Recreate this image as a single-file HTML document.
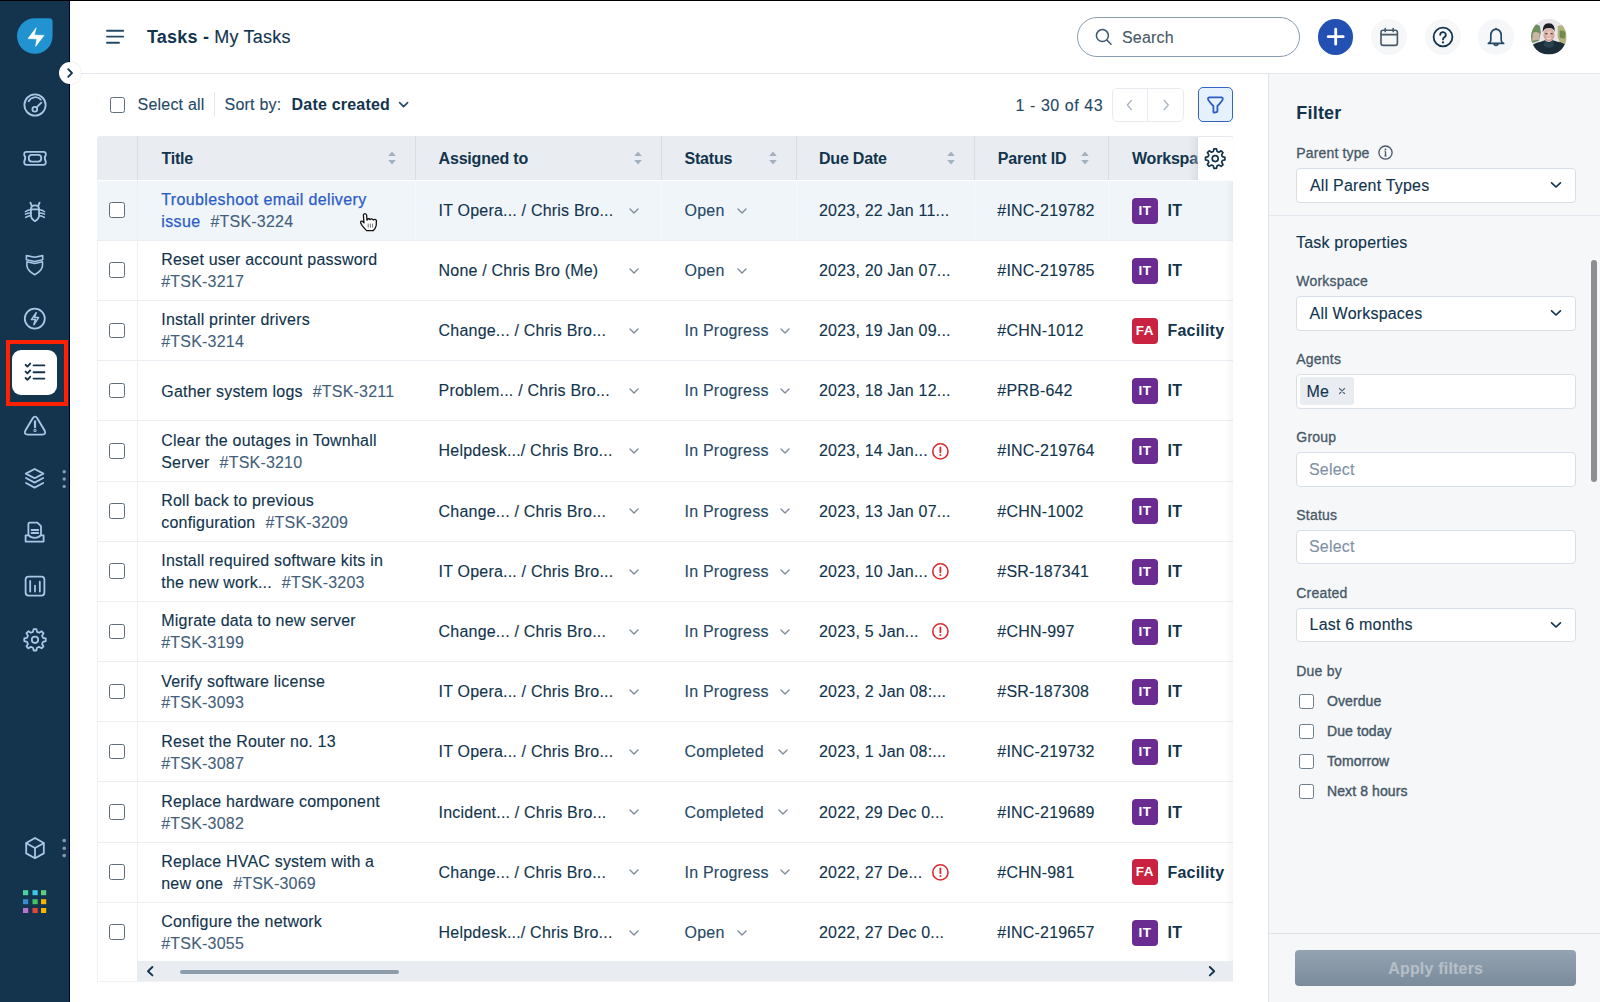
<!DOCTYPE html>
<html><head><meta charset="utf-8">
<style>
*{box-sizing:border-box;margin:0;padding:0}
html,body{width:1600px;height:1002px;overflow:hidden;background:#fff;font-family:"Liberation Sans",sans-serif;color:#12344d}
.abs{position:absolute}
.t{position:absolute;white-space:nowrap;line-height:1;letter-spacing:0.2px;-webkit-text-stroke:0.12px currentColor}
.md{-webkit-text-stroke:0.25px currentColor}
#topline{position:absolute;left:0;top:0;width:1600px;height:1px;background:#000;z-index:50}
#side{position:absolute;left:0;top:0;width:70px;height:1002px;background:#14334d;border-right:1px solid #000033}
#hdr{position:absolute;left:70px;top:0;width:1530px;height:74px;border-bottom:1px solid #e3e8ee;background:#fff}
#panel{position:absolute;left:1268px;top:74px;width:332px;height:928px;background:#f5f7f9;border-left:1px solid #dfe4ea}
.cb{position:absolute;width:15.5px;height:15.5px;border:1.6px solid #5f6d7a;border-radius:2.5px;background:#fff}
.row{position:absolute;left:97px;width:1136px;height:60.14px;border-bottom:1px solid #ebeff3}
.hover{background:#f0f5fa}
.badge{position:absolute;width:26px;height:26px;border-radius:4px;color:#fff;font-weight:700;font-size:13.5px;line-height:26px;text-align:center}
.fbox{position:absolute;left:1296px;width:280px;height:35px;background:#fff;border:1px solid #d8dfe6;border-radius:4px}
</style></head>
<body>
<div id="topline"></div>
<div id="side"><svg class="abs" style="left:0;top:0" width="70" height="1002" viewBox="0 0 70 1002">
<g fill="none" stroke="#a9c6e6" stroke-width="1.8" stroke-linecap="round" stroke-linejoin="round">
<!-- gauge -->
<circle cx="35" cy="105" r="10.6"/>
<path d="M28.6 101.2 A7.6 7.6 0 0 1 40.8 99.6"/>
<path d="M36.8 107.2 L41.4 102.6"/>
<circle cx="34.8" cy="109.2" r="2.4"/>
<!-- ticket -->
<path d="M26.4 151.8 H43.6 A2.2 2.2 0 0 1 45.8 154 V155 Q43.6 158.2 45.8 161.4 V162.6 A2.2 2.2 0 0 1 43.6 164.8 H26.4 A2.2 2.2 0 0 1 24.2 162.6 V161.4 Q26.4 158.2 24.2 155 V154 A2.2 2.2 0 0 1 26.4 151.8 Z"/>
<rect x="28.8" y="154.8" width="12.4" height="6.8" rx="3"/>
<!-- bug -->
<path d="M30.9 209.4 H39.1 V215.4 Q39.1 218.6 35 221.2 Q30.9 218.6 30.9 215.4 Z"/>
<path d="M30.9 209.4 Q30.9 205.3 35 205.3 Q39.1 205.3 39.1 209.4"/>
<path d="M31.8 205.9 L30.4 202.6 M38.2 205.9 L39.6 202.6"/>
<path d="M30.9 209.8 Q27.6 209.9 25.4 211.8 M30.9 213 Q27.6 213 25.4 214.2 M30.9 215.4 Q27.8 215.8 25.6 217.4 M39.1 209.8 Q42.4 209.9 44.6 211.8 M39.1 213 Q42.4 213 44.6 214.2 M39.1 215.4 Q42.2 215.8 44.4 217.4" stroke-width="1.5"/>
<!-- shield -->
<path d="M26.4 255.6 L34.7 257.3 L42.7 255.6 V259.8 L34.7 261.5 L26.4 259.8 Z" stroke-width="1.6"/>
<path d="M26.9 261.8 L34.7 263.5 L42.5 261.8 V265.6 Q42.2 270.4 34.7 274.8 Q27.2 270.4 26.9 265.6 Z" stroke-width="1.6"/>
<!-- lightning circle -->
<circle cx="34.8" cy="318.6" r="10"/>
<path d="M36.2 312.6 L31.4 319.6 H35.4 L33.8 324.8 L38.6 317.6 H34.6 Z" stroke-width="1.5"/>
<!-- warning -->
<path d="M32.6 418.4 Q35 414.9 37.4 418.4 L44.6 430.6 Q46.5 434.6 42.2 434.6 H27.8 Q23.5 434.6 25.4 430.6 Z" stroke-width="1.9"/>
<path d="M35 421.4 V427.2" stroke-width="2.2"/>
<circle cx="35" cy="430.4" r="0.5" stroke-width="2.2"/>
<!-- layers -->
<path d="M34.6 469 L43.4 473.6 L34.6 478.2 L25.8 473.6 Z"/>
<path d="M26 478 L34.6 482.6 L43.2 478"/>
<path d="M26 483 L34.6 487.6 L43.2 483"/>
<!-- doc tray -->
<path d="M28.4 535 V524 Q28.4 522.6 29.8 522.6 H37.4 L41 526.2 V535"/>
<path d="M31.6 530 H38.2 M31.6 533 H38.2"/>
<path d="M25.6 535.4 H28.8 Q30.6 537.8 34.7 537.8 Q38.8 537.8 40.6 535.4 H43.6 V541.6 H25.6 Z"/>
<!-- bar chart -->
<rect x="25.6" y="576.6" width="18.8" height="19" rx="3"/>
<path d="M30.2 581 V591.6 M35 585.6 V591.6 M39.8 581.6 V591.6"/>
<!-- cube -->
<path d="M35 838 L43.8 843 V853.4 L35 858.2 L26.2 853.4 V843 Z"/>
<path d="M26.4 843.2 L35 848 L43.6 843.2 M35 848 V857.8"/>
</g>
<!-- gear -->
<path fill="none" stroke="#a9c6e6" stroke-width="1.8" stroke-linejoin="round" d="M45.71 638.45 L45.71 641.15 L42.94 641.84 L42.06 643.97 L43.53 646.42 L41.62 648.33 L39.17 646.86 L37.04 647.74 L36.35 650.51 L33.65 650.51 L32.96 647.74 L30.83 646.86 L28.38 648.33 L26.47 646.42 L27.94 643.97 L27.06 641.84 L24.29 641.15 L24.29 638.45 L27.06 637.76 L27.94 635.63 L26.47 633.18 L28.38 631.27 L30.83 632.74 L32.96 631.86 L33.65 629.09 L36.35 629.09 L37.04 631.86 L39.17 632.74 L41.62 631.27 L43.53 633.18 L42.06 635.63 L42.94 637.76 Z"/><circle cx="35" cy="639.8" r="3.2" fill="none" stroke="#a9c6e6" stroke-width="1.8"/>
<g fill="#8a9bb0">
<circle cx="64.2" cy="471.8" r="1.7"/><circle cx="64.2" cy="479" r="1.7"/><circle cx="64.2" cy="486.4" r="1.7"/>
<circle cx="64.2" cy="840.6" r="1.8"/><circle cx="64.2" cy="848.2" r="1.8"/><circle cx="64.2" cy="855.6" r="1.8"/>
</g>
<rect x="23" y="890.2" width="5.2" height="5" fill="#4fd1a6"/>
<rect x="32.5" y="890.2" width="5.2" height="5" fill="#3dcbe9"/>
<rect x="41" y="890.2" width="5.2" height="5" fill="#5ecf7a"/>
<rect x="23" y="899.2" width="5.2" height="5" fill="#3b8bd4"/>
<rect x="32.5" y="899.2" width="5.2" height="5" fill="#42c46b"/>
<rect x="41" y="899.2" width="5.2" height="5" fill="#f7b500"/>
<rect x="23" y="908" width="5.2" height="5" fill="#b974cc"/>
<rect x="32.5" y="908" width="5.2" height="5" fill="#e8453c"/>
<rect x="41" y="908" width="5.2" height="5" fill="#f7b500"/>
</svg>
<svg class="abs" style="left:17px;top:18px" width="36" height="36" viewBox="0 0 36 36">
<path d="M17.8 0.2 H32.2 A3.4 3.4 0 0 1 35.6 3.6 V17.8 A17.8 17.8 0 1 1 17.8 0.2 Z" fill="#2193d1"/>
<path d="M19.2 9.8 L11 20.6 L19.8 20.9 L18.6 28.4 L27 17.4 L17.4 17.1 Z" fill="#fff" stroke="#fff" stroke-width="0.6" stroke-linejoin="round"/>
</svg><div class="abs" style="left:12.4px;top:350px;width:44.8px;height:44.8px;background:#fff;border-radius:9px"></div>
<svg class="abs" style="left:12px;top:350px" width="46" height="46" viewBox="12 350 46 46">
<g fill="none" stroke="#12344d" stroke-width="1.9" stroke-linecap="round" stroke-linejoin="round">
<path d="M25.6 364.8 L27.4 366.6 L30.2 363.6"/>
<path d="M25.6 371.6 L27.4 373.4 L30.2 370.4"/>
<path d="M25.6 378 L27.4 379.8 L30.2 376.8"/>
<path d="M33.6 365.4 H44.4 M33.6 372.2 H44.4 M33.6 378.6 H44.4"/>
</g></svg>
<div class="abs" style="left:6px;top:340.4px;width:62px;height:65.8px;border:4px solid #ff2200"></div>
</div><div class="abs" style="left:59px;top:62px;width:22px;height:22px;border-radius:50%;background:#fff;box-shadow:0 0 2px rgba(0,0,0,0.15);z-index:5"></div>
<svg class="abs" style="left:59px;top:62px;z-index:6" width="22" height="22" viewBox="0 0 22 22"><path d="M9.2 7.2 L13 11 L9.2 14.8" fill="none" stroke="#12344d" stroke-width="1.8" stroke-linecap="round" stroke-linejoin="round"/></svg><div id="hdr"></div><svg class="abs" style="left:100px;top:24px" width="30" height="26" viewBox="100 24 30 26"><g stroke="#264966" stroke-width="1.9" stroke-linecap="round"><path d="M107 30.7 H123.2 M107 36.6 H123.2 M107 42.8 H119"/></g></svg><div class="t" style="left:147px;top:28.36px;font-size:18px;font-weight:400;color:#12344d;"><b style="font-weight:700;-webkit-text-stroke:0">Tasks - </b>My Tasks</div><div class="abs" style="left:1077px;top:17px;width:223px;height:40px;border:1.2px solid #8a9cb0;border-radius:20px"></div><svg class="abs" style="left:1090px;top:24px" width="26" height="26" viewBox="1090 24 26 26"><g fill="none" stroke="#3b5770" stroke-width="1.5" stroke-linecap="round"><circle cx="1102.4" cy="35.6" r="6"/><path d="M1106.8 40 L1111 44.2"/></g></svg><div class="t" style="left:1122px;top:29.56px;font-size:16px;font-weight:400;color:#475867;">Search</div><div class="abs" style="left:1317.6px;top:19.3px;width:35.4px;height:35.4px;border-radius:50%;background:#2350b3"></div><svg class="abs" style="left:1317.6px;top:19.3px" width="36" height="36" viewBox="0 0 36 36"><path d="M17.7 10.2 V25.2 M10.2 17.7 H25.2" stroke="#fff" stroke-width="2.8" stroke-linecap="round"/></svg><div class="abs" style="left:1371px;top:19px;width:36px;height:36px;border-radius:50%;background:#f5f7f9"></div><div class="abs" style="left:1424.5px;top:19px;width:36px;height:36px;border-radius:50%;background:#f5f7f9"></div><div class="abs" style="left:1478px;top:19px;width:36px;height:36px;border-radius:50%;background:#f5f7f9"></div><svg class="abs" style="left:1371px;top:19px" width="36" height="36" viewBox="1371 19 36 36"><g fill="none" stroke="#475867" stroke-width="1.6" stroke-linecap="round" stroke-linejoin="round">
<rect x="1381" y="30.2" width="16.4" height="15.2" rx="2.2"/><path d="M1381.2 34.6 H1397.2 M1385.2 28.6 V31.6 M1393.2 28.6 V31.6"/></g></svg><svg class="abs" style="left:1424.5px;top:19px" width="36" height="36" viewBox="0 0 36 36"><g fill="none" stroke="#12344d" stroke-width="1.8" stroke-linecap="round">
<circle cx="18" cy="18" r="9.4"/><path d="M15.2 15.8 A2.8 2.8 0 1 1 19.2 18.4 Q18 19 18 20.4"/></g><circle cx="18" cy="23.4" r="1.1" fill="#12344d"/></svg><svg class="abs" style="left:1478px;top:19px" width="36" height="36" viewBox="0 0 36 36"><g fill="none" stroke="#264966" stroke-width="1.7" stroke-linecap="round" stroke-linejoin="round">
<path d="M18 9.6 Q18 9.6 18 10.2 Q12.8 11 12.8 16.6 V21.2 Q12.8 23.4 10.4 24.4 H25.6 Q23.2 23.4 23.2 21.2 V16.6 Q23.2 11 18 10.2"/><path d="M16.2 25.4 Q18 27.6 19.8 25.4"/></g></svg><svg class="abs" style="left:1531.3px;top:19.3px" width="35.6" height="35.6" viewBox="0 0 36 36">
<defs><clipPath id="av"><circle cx="18" cy="18" r="18"/></clipPath><radialGradient id="fg" cx="0.5" cy="0.4" r="0.6"><stop offset="0" stop-color="#f0cfc4"/><stop offset="1" stop-color="#c99a8c"/></radialGradient></defs>
<g clip-path="url(#av)">
<rect width="36" height="36" fill="#ebe5ec"/>
<path d="M0 6 Q5 4 9 7 L10 14 L8 22 L2 24 L0 24 Z" fill="#6d8f5e"/>
<path d="M2 14 Q6 12 9 15 L8 21 L1 22 Z" fill="#c9b6a6"/>
<path d="M27 7 Q32 5 36 8 V26 L30 26 L27 18 Z" fill="#b3b37e"/>
<path d="M29 12 Q33 11 35 14 L34 20 L29 19 Z" fill="#6f8a4e"/>
<path d="M0 28 Q3 24 10 23 L14 21.5 Q18 25 22 21.5 L27 23 Q33 24 36 27 V36 H0 Z" fill="#1b2d38"/>
<path d="M14 21.5 Q18 27 22 21.5 L23.5 27 Q18 31 12.5 27 Z" fill="#2a4250"/>
<ellipse cx="18.2" cy="16" rx="5.6" ry="6.8" fill="url(#fg)"/>
<path d="M11.8 13.4 Q11.4 4.2 18 4.2 Q24.6 4.2 24 13 Q23 8.8 18.2 9 Q13.4 8.8 11.8 13.4 Z" fill="#1c1f24"/>
<path d="M14.4 15 H16.8 M19.6 15 H22" stroke="#3a2a26" stroke-width="1.1"/>
<path d="M16 19.6 Q18.2 21 20.4 19.6" stroke="#fff" stroke-width="0.8" fill="none"/>
</g></svg><div class="cb" style="left:109.5px;top:97.2px"></div><div class="t" style="left:137.6px;top:97.46px;font-size:16px;font-weight:400;color:#264966;">Select all</div><div class="abs" style="left:214px;top:92px;width:1px;height:25px;background:#e3e8ee"></div><div class="t" style="left:224.6px;top:97.46px;font-size:16px;font-weight:400;color:#264966;">Sort by:</div><div class="t" style="left:291.6px;top:97.46px;font-size:16px;font-weight:700;color:#12344d;-webkit-text-stroke:0;">Date created</div><svg class="abs" style="left:396px;top:98px" width="16" height="14" viewBox="396 98 16 14"><path d="M399.6 102.6 L403.6 106.6 L407.6 102.6" fill="none" stroke="#264966" stroke-width="1.6" stroke-linecap="round" stroke-linejoin="round"/></svg><div class="t" style="left:1015.6px;top:98.16px;font-size:16px;font-weight:400;color:#264966;letter-spacing:0.55px">1 - 30 of 43</div><div class="abs" style="left:1112.2px;top:87.6px;width:71.4px;height:34.8px;border:1px solid #e8ecf0;border-radius:5px"></div><div class="abs" style="left:1147.4px;top:88px;width:1px;height:34px;background:#e8ecf0"></div><svg class="abs" style="left:1112px;top:88px" width="72" height="35" viewBox="0 0 72 35"><g fill="none" stroke="#a7b3bf" stroke-width="1.4" stroke-linecap="round" stroke-linejoin="round"><path d="M19.4 12.4 L15.4 17 L19.4 21.6 M52.2 12.4 L56.2 17 L52.2 21.6"/></g></svg><div class="abs" style="left:1197.8px;top:87.4px;width:35px;height:35px;border:1.7px solid #3563c8;border-radius:5px;background:#e5f1fc"></div><svg class="abs" style="left:1198px;top:88px" width="35" height="35" viewBox="0 0 35 35"><path d="M10.2 11.6 Q9.4 9.4 11.6 9.4 H23.2 Q25.4 9.4 24.6 11.6 Q23.6 13.8 19.4 18 V23 Q19.4 24 18.4 24.2 L16.4 24.6 Q15.4 24.8 15.4 23.8 V18 Q11.2 13.8 10.2 11.6 Z" fill="none" stroke="#2c5cc5" stroke-width="1.8" stroke-linejoin="round"/></svg><style>.tsk{color:#44607a;margin-left:10px}.tsk0{color:#44607a}</style><div class="abs" style="left:97px;top:136px;width:1136px;height:845.5px;border:1px solid #f0f2f5;border-right:0;border-radius:4px 0 0 0"></div><div class="abs" style="left:97px;top:136px;width:1136px;height:44.2px;background:#e9edf1;border-radius:4px 4px 0 0"></div><div class="abs" style="left:137px;top:136px;width:1px;height:44.2px;background:#d6dde4"></div><div class="abs" style="left:415px;top:136px;width:1px;height:44.2px;background:#d6dde4"></div><div class="abs" style="left:661px;top:136px;width:1px;height:44.2px;background:#d6dde4"></div><div class="abs" style="left:796px;top:136px;width:1px;height:44.2px;background:#d6dde4"></div><div class="abs" style="left:974px;top:136px;width:1px;height:44.2px;background:#d6dde4"></div><div class="abs" style="left:1108px;top:136px;width:1px;height:44.2px;background:#d6dde4"></div><div class="abs hover" style="left:97px;top:180.6px;width:1136px;height:59.4px"></div><div class="abs" style="left:415px;top:180.10px;width:1px;height:60.18px;background:#f7fafc"></div><div class="abs" style="left:661px;top:180.10px;width:1px;height:60.18px;background:#f7fafc"></div><div class="abs" style="left:796px;top:180.10px;width:1px;height:60.18px;background:#f7fafc"></div><div class="abs" style="left:974px;top:180.10px;width:1px;height:60.18px;background:#f7fafc"></div><div class="abs" style="left:1108px;top:180.10px;width:1px;height:60.18px;background:#f7fafc"></div><div class="abs" style="left:97px;top:239.80px;width:1136px;height:1px;background:#ebeff3"></div><div class="cb" style="left:109.4px;top:202.30px"></div><div class="t" style="left:161.25px;top:192.06px;font-size:16px;font-weight:400;color:#12344d;"><span class="md" style="color:#2c5cc5;letter-spacing:0.38px">Troubleshoot email delivery</span></div><div class="t" style="left:161.25px;top:213.96px;font-size:16px;font-weight:400;color:#12344d;"><span class="md" style="color:#2c5cc5;letter-spacing:0.38px">issue</span><span class="tsk">#TSK-3224</span></div><div class="t" style="left:438.6px;top:202.76px;font-size:16px;font-weight:400;color:#12344d;">IT Opera... / Chris Bro...</div><svg class="abs" style="left:628px;top:205.5px" width="12" height="10" viewBox="0 0 12 10"><path d="M2 3 L6 7 L10 3" fill="none" stroke="#7d8d9c" stroke-width="1.4" stroke-linecap="round" stroke-linejoin="round"/></svg><div class="t" style="left:684.6px;top:202.76px;font-size:16px;font-weight:400;color:#264966;">Open</div><svg class="abs" style="left:735.5px;top:205.5px" width="12" height="10" viewBox="0 0 12 10"><path d="M2 3 L6 7 L10 3" fill="none" stroke="#7d8d9c" stroke-width="1.4" stroke-linecap="round" stroke-linejoin="round"/></svg><div class="t" style="left:819px;top:202.76px;font-size:16px;font-weight:400;color:#12344d;">2023, 22 Jan 11...</div><div class="t" style="left:997.3px;top:202.76px;font-size:16px;font-weight:400;color:#12344d;">#INC-219782</div><div class="badge" style="left:1132px;top:197.50px;background:#6b2c91;letter-spacing:0.6px">IT</div><div class="t" style="left:1167.5px;top:202.76px;font-size:16px;font-weight:700;color:#12344d;-webkit-text-stroke:0;">IT</div><div class="abs" style="left:97px;top:299.98px;width:1136px;height:1px;background:#ebeff3"></div><div class="cb" style="left:109.4px;top:262.48px"></div><div class="t" style="left:161.25px;top:252.24px;font-size:16px;font-weight:400;color:#12344d;">Reset user account password</div><div class="t" style="left:161.25px;top:274.14px;font-size:16px;font-weight:400;color:#12344d;"><span class="tsk0">#TSK-3217</span></div><div class="t" style="left:438.6px;top:262.94px;font-size:16px;font-weight:400;color:#12344d;">None / Chris Bro (Me)</div><svg class="abs" style="left:628px;top:265.67999999999995px" width="12" height="10" viewBox="0 0 12 10"><path d="M2 3 L6 7 L10 3" fill="none" stroke="#7d8d9c" stroke-width="1.4" stroke-linecap="round" stroke-linejoin="round"/></svg><div class="t" style="left:684.6px;top:262.94px;font-size:16px;font-weight:400;color:#264966;">Open</div><svg class="abs" style="left:735.5px;top:265.67999999999995px" width="12" height="10" viewBox="0 0 12 10"><path d="M2 3 L6 7 L10 3" fill="none" stroke="#7d8d9c" stroke-width="1.4" stroke-linecap="round" stroke-linejoin="round"/></svg><div class="t" style="left:819px;top:262.94px;font-size:16px;font-weight:400;color:#12344d;">2023, 20 Jan 07...</div><div class="t" style="left:997.3px;top:262.94px;font-size:16px;font-weight:400;color:#12344d;">#INC-219785</div><div class="badge" style="left:1132px;top:257.68px;background:#6b2c91;letter-spacing:0.6px">IT</div><div class="t" style="left:1167.5px;top:262.94px;font-size:16px;font-weight:700;color:#12344d;-webkit-text-stroke:0;">IT</div><div class="abs" style="left:97px;top:360.16px;width:1136px;height:1px;background:#ebeff3"></div><div class="cb" style="left:109.4px;top:322.66px"></div><div class="t" style="left:161.25px;top:312.42px;font-size:16px;font-weight:400;color:#12344d;">Install printer drivers</div><div class="t" style="left:161.25px;top:334.32px;font-size:16px;font-weight:400;color:#12344d;"><span class="tsk0">#TSK-3214</span></div><div class="t" style="left:438.6px;top:323.12px;font-size:16px;font-weight:400;color:#12344d;">Change... / Chris Bro...</div><svg class="abs" style="left:628px;top:325.85999999999996px" width="12" height="10" viewBox="0 0 12 10"><path d="M2 3 L6 7 L10 3" fill="none" stroke="#7d8d9c" stroke-width="1.4" stroke-linecap="round" stroke-linejoin="round"/></svg><div class="t" style="left:684.6px;top:323.12px;font-size:16px;font-weight:400;color:#264966;">In Progress</div><svg class="abs" style="left:779.2px;top:325.85999999999996px" width="12" height="10" viewBox="0 0 12 10"><path d="M2 3 L6 7 L10 3" fill="none" stroke="#7d8d9c" stroke-width="1.4" stroke-linecap="round" stroke-linejoin="round"/></svg><div class="t" style="left:819px;top:323.12px;font-size:16px;font-weight:400;color:#12344d;">2023, 19 Jan 09...</div><div class="t" style="left:997.3px;top:323.12px;font-size:16px;font-weight:400;color:#12344d;">#CHN-1012</div><div class="badge" style="left:1132px;top:317.86px;background:#c92341;letter-spacing:0.6px">FA</div><div class="t" style="left:1167.5px;top:323.12px;font-size:16px;font-weight:700;color:#12344d;-webkit-text-stroke:0;">Facility</div><div class="abs" style="left:97px;top:420.34px;width:1136px;height:1px;background:#ebeff3"></div><div class="cb" style="left:109.4px;top:382.84px"></div><div class="t" style="left:161.25px;top:383.80px;font-size:16px;font-weight:400;color:#12344d;">Gather system logs<span class="tsk">#TSK-3211</span></div><div class="t" style="left:438.6px;top:383.30px;font-size:16px;font-weight:400;color:#12344d;">Problem... / Chris Bro...</div><svg class="abs" style="left:628px;top:386.03999999999996px" width="12" height="10" viewBox="0 0 12 10"><path d="M2 3 L6 7 L10 3" fill="none" stroke="#7d8d9c" stroke-width="1.4" stroke-linecap="round" stroke-linejoin="round"/></svg><div class="t" style="left:684.6px;top:383.30px;font-size:16px;font-weight:400;color:#264966;">In Progress</div><svg class="abs" style="left:779.2px;top:386.03999999999996px" width="12" height="10" viewBox="0 0 12 10"><path d="M2 3 L6 7 L10 3" fill="none" stroke="#7d8d9c" stroke-width="1.4" stroke-linecap="round" stroke-linejoin="round"/></svg><div class="t" style="left:819px;top:383.30px;font-size:16px;font-weight:400;color:#12344d;">2023, 18 Jan 12...</div><div class="t" style="left:997.3px;top:383.30px;font-size:16px;font-weight:400;color:#12344d;">#PRB-642</div><div class="badge" style="left:1132px;top:378.04px;background:#6b2c91;letter-spacing:0.6px">IT</div><div class="t" style="left:1167.5px;top:383.30px;font-size:16px;font-weight:700;color:#12344d;-webkit-text-stroke:0;">IT</div><div class="abs" style="left:97px;top:480.52px;width:1136px;height:1px;background:#ebeff3"></div><div class="cb" style="left:109.4px;top:443.02px"></div><div class="t" style="left:161.25px;top:432.78px;font-size:16px;font-weight:400;color:#12344d;">Clear the outages in Townhall</div><div class="t" style="left:161.25px;top:454.68px;font-size:16px;font-weight:400;color:#12344d;">Server<span class="tsk">#TSK-3210</span></div><div class="t" style="left:438.6px;top:443.48px;font-size:16px;font-weight:400;color:#12344d;">Helpdesk.../ Chris Bro...</div><svg class="abs" style="left:628px;top:446.21999999999997px" width="12" height="10" viewBox="0 0 12 10"><path d="M2 3 L6 7 L10 3" fill="none" stroke="#7d8d9c" stroke-width="1.4" stroke-linecap="round" stroke-linejoin="round"/></svg><div class="t" style="left:684.6px;top:443.48px;font-size:16px;font-weight:400;color:#264966;">In Progress</div><svg class="abs" style="left:779.2px;top:446.21999999999997px" width="12" height="10" viewBox="0 0 12 10"><path d="M2 3 L6 7 L10 3" fill="none" stroke="#7d8d9c" stroke-width="1.4" stroke-linecap="round" stroke-linejoin="round"/></svg><div class="t" style="left:819px;top:443.48px;font-size:16px;font-weight:400;color:#12344d;">2023, 14 Jan...</div><svg class="abs" style="left:931px;top:441.62px" width="19" height="19" viewBox="0 0 19 19"><circle cx="9.4" cy="9.4" r="7.6" fill="none" stroke="#d72d30" stroke-width="1.6"/><path d="M9.4 5.4 V10.2" stroke="#d72d30" stroke-width="1.8" stroke-linecap="round"/><circle cx="9.4" cy="13" r="1.05" fill="#d72d30"/></svg><div class="t" style="left:997.3px;top:443.48px;font-size:16px;font-weight:400;color:#12344d;">#INC-219764</div><div class="badge" style="left:1132px;top:438.22px;background:#6b2c91;letter-spacing:0.6px">IT</div><div class="t" style="left:1167.5px;top:443.48px;font-size:16px;font-weight:700;color:#12344d;-webkit-text-stroke:0;">IT</div><div class="abs" style="left:97px;top:540.70px;width:1136px;height:1px;background:#ebeff3"></div><div class="cb" style="left:109.4px;top:503.20px"></div><div class="t" style="left:161.25px;top:492.96px;font-size:16px;font-weight:400;color:#12344d;">Roll back to previous</div><div class="t" style="left:161.25px;top:514.86px;font-size:16px;font-weight:400;color:#12344d;">configuration<span class="tsk">#TSK-3209</span></div><div class="t" style="left:438.6px;top:503.66px;font-size:16px;font-weight:400;color:#12344d;">Change... / Chris Bro...</div><svg class="abs" style="left:628px;top:506.4px" width="12" height="10" viewBox="0 0 12 10"><path d="M2 3 L6 7 L10 3" fill="none" stroke="#7d8d9c" stroke-width="1.4" stroke-linecap="round" stroke-linejoin="round"/></svg><div class="t" style="left:684.6px;top:503.66px;font-size:16px;font-weight:400;color:#264966;">In Progress</div><svg class="abs" style="left:779.2px;top:506.4px" width="12" height="10" viewBox="0 0 12 10"><path d="M2 3 L6 7 L10 3" fill="none" stroke="#7d8d9c" stroke-width="1.4" stroke-linecap="round" stroke-linejoin="round"/></svg><div class="t" style="left:819px;top:503.66px;font-size:16px;font-weight:400;color:#12344d;">2023, 13 Jan 07...</div><div class="t" style="left:997.3px;top:503.66px;font-size:16px;font-weight:400;color:#12344d;">#CHN-1002</div><div class="badge" style="left:1132px;top:498.40px;background:#6b2c91;letter-spacing:0.6px">IT</div><div class="t" style="left:1167.5px;top:503.66px;font-size:16px;font-weight:700;color:#12344d;-webkit-text-stroke:0;">IT</div><div class="abs" style="left:97px;top:600.88px;width:1136px;height:1px;background:#ebeff3"></div><div class="cb" style="left:109.4px;top:563.38px"></div><div class="t" style="left:161.25px;top:553.14px;font-size:16px;font-weight:400;color:#12344d;">Install required software kits in</div><div class="t" style="left:161.25px;top:575.04px;font-size:16px;font-weight:400;color:#12344d;">the new work...<span class="tsk">#TSK-3203</span></div><div class="t" style="left:438.6px;top:563.84px;font-size:16px;font-weight:400;color:#12344d;">IT Opera... / Chris Bro...</div><svg class="abs" style="left:628px;top:566.5799999999999px" width="12" height="10" viewBox="0 0 12 10"><path d="M2 3 L6 7 L10 3" fill="none" stroke="#7d8d9c" stroke-width="1.4" stroke-linecap="round" stroke-linejoin="round"/></svg><div class="t" style="left:684.6px;top:563.84px;font-size:16px;font-weight:400;color:#264966;">In Progress</div><svg class="abs" style="left:779.2px;top:566.5799999999999px" width="12" height="10" viewBox="0 0 12 10"><path d="M2 3 L6 7 L10 3" fill="none" stroke="#7d8d9c" stroke-width="1.4" stroke-linecap="round" stroke-linejoin="round"/></svg><div class="t" style="left:819px;top:563.84px;font-size:16px;font-weight:400;color:#12344d;">2023, 10 Jan...</div><svg class="abs" style="left:931px;top:561.98px" width="19" height="19" viewBox="0 0 19 19"><circle cx="9.4" cy="9.4" r="7.6" fill="none" stroke="#d72d30" stroke-width="1.6"/><path d="M9.4 5.4 V10.2" stroke="#d72d30" stroke-width="1.8" stroke-linecap="round"/><circle cx="9.4" cy="13" r="1.05" fill="#d72d30"/></svg><div class="t" style="left:997.3px;top:563.84px;font-size:16px;font-weight:400;color:#12344d;">#SR-187341</div><div class="badge" style="left:1132px;top:558.58px;background:#6b2c91;letter-spacing:0.6px">IT</div><div class="t" style="left:1167.5px;top:563.84px;font-size:16px;font-weight:700;color:#12344d;-webkit-text-stroke:0;">IT</div><div class="abs" style="left:97px;top:661.06px;width:1136px;height:1px;background:#ebeff3"></div><div class="cb" style="left:109.4px;top:623.56px"></div><div class="t" style="left:161.25px;top:613.32px;font-size:16px;font-weight:400;color:#12344d;">Migrate data to new server</div><div class="t" style="left:161.25px;top:635.22px;font-size:16px;font-weight:400;color:#12344d;"><span class="tsk0">#TSK-3199</span></div><div class="t" style="left:438.6px;top:624.02px;font-size:16px;font-weight:400;color:#12344d;">Change... / Chris Bro...</div><svg class="abs" style="left:628px;top:626.76px" width="12" height="10" viewBox="0 0 12 10"><path d="M2 3 L6 7 L10 3" fill="none" stroke="#7d8d9c" stroke-width="1.4" stroke-linecap="round" stroke-linejoin="round"/></svg><div class="t" style="left:684.6px;top:624.02px;font-size:16px;font-weight:400;color:#264966;">In Progress</div><svg class="abs" style="left:779.2px;top:626.76px" width="12" height="10" viewBox="0 0 12 10"><path d="M2 3 L6 7 L10 3" fill="none" stroke="#7d8d9c" stroke-width="1.4" stroke-linecap="round" stroke-linejoin="round"/></svg><div class="t" style="left:819px;top:624.02px;font-size:16px;font-weight:400;color:#12344d;">2023, 5 Jan...</div><svg class="abs" style="left:931px;top:622.16px" width="19" height="19" viewBox="0 0 19 19"><circle cx="9.4" cy="9.4" r="7.6" fill="none" stroke="#d72d30" stroke-width="1.6"/><path d="M9.4 5.4 V10.2" stroke="#d72d30" stroke-width="1.8" stroke-linecap="round"/><circle cx="9.4" cy="13" r="1.05" fill="#d72d30"/></svg><div class="t" style="left:997.3px;top:624.02px;font-size:16px;font-weight:400;color:#12344d;">#CHN-997</div><div class="badge" style="left:1132px;top:618.76px;background:#6b2c91;letter-spacing:0.6px">IT</div><div class="t" style="left:1167.5px;top:624.02px;font-size:16px;font-weight:700;color:#12344d;-webkit-text-stroke:0;">IT</div><div class="abs" style="left:97px;top:721.24px;width:1136px;height:1px;background:#ebeff3"></div><div class="cb" style="left:109.4px;top:683.74px"></div><div class="t" style="left:161.25px;top:673.50px;font-size:16px;font-weight:400;color:#12344d;">Verify software license</div><div class="t" style="left:161.25px;top:695.40px;font-size:16px;font-weight:400;color:#12344d;"><span class="tsk0">#TSK-3093</span></div><div class="t" style="left:438.6px;top:684.20px;font-size:16px;font-weight:400;color:#12344d;">IT Opera... / Chris Bro...</div><svg class="abs" style="left:628px;top:686.9399999999999px" width="12" height="10" viewBox="0 0 12 10"><path d="M2 3 L6 7 L10 3" fill="none" stroke="#7d8d9c" stroke-width="1.4" stroke-linecap="round" stroke-linejoin="round"/></svg><div class="t" style="left:684.6px;top:684.20px;font-size:16px;font-weight:400;color:#264966;">In Progress</div><svg class="abs" style="left:779.2px;top:686.9399999999999px" width="12" height="10" viewBox="0 0 12 10"><path d="M2 3 L6 7 L10 3" fill="none" stroke="#7d8d9c" stroke-width="1.4" stroke-linecap="round" stroke-linejoin="round"/></svg><div class="t" style="left:819px;top:684.20px;font-size:16px;font-weight:400;color:#12344d;">2023, 2 Jan 08:...</div><div class="t" style="left:997.3px;top:684.20px;font-size:16px;font-weight:400;color:#12344d;">#SR-187308</div><div class="badge" style="left:1132px;top:678.94px;background:#6b2c91;letter-spacing:0.6px">IT</div><div class="t" style="left:1167.5px;top:684.20px;font-size:16px;font-weight:700;color:#12344d;-webkit-text-stroke:0;">IT</div><div class="abs" style="left:97px;top:781.42px;width:1136px;height:1px;background:#ebeff3"></div><div class="cb" style="left:109.4px;top:743.92px"></div><div class="t" style="left:161.25px;top:733.68px;font-size:16px;font-weight:400;color:#12344d;">Reset the Router no. 13</div><div class="t" style="left:161.25px;top:755.58px;font-size:16px;font-weight:400;color:#12344d;"><span class="tsk0">#TSK-3087</span></div><div class="t" style="left:438.6px;top:744.38px;font-size:16px;font-weight:400;color:#12344d;">IT Opera... / Chris Bro...</div><svg class="abs" style="left:628px;top:747.12px" width="12" height="10" viewBox="0 0 12 10"><path d="M2 3 L6 7 L10 3" fill="none" stroke="#7d8d9c" stroke-width="1.4" stroke-linecap="round" stroke-linejoin="round"/></svg><div class="t" style="left:684.6px;top:744.38px;font-size:16px;font-weight:400;color:#264966;">Completed</div><svg class="abs" style="left:777px;top:747.12px" width="12" height="10" viewBox="0 0 12 10"><path d="M2 3 L6 7 L10 3" fill="none" stroke="#7d8d9c" stroke-width="1.4" stroke-linecap="round" stroke-linejoin="round"/></svg><div class="t" style="left:819px;top:744.38px;font-size:16px;font-weight:400;color:#12344d;">2023, 1 Jan 08:...</div><div class="t" style="left:997.3px;top:744.38px;font-size:16px;font-weight:400;color:#12344d;">#INC-219732</div><div class="badge" style="left:1132px;top:739.12px;background:#6b2c91;letter-spacing:0.6px">IT</div><div class="t" style="left:1167.5px;top:744.38px;font-size:16px;font-weight:700;color:#12344d;-webkit-text-stroke:0;">IT</div><div class="abs" style="left:97px;top:841.60px;width:1136px;height:1px;background:#ebeff3"></div><div class="cb" style="left:109.4px;top:804.10px"></div><div class="t" style="left:161.25px;top:793.86px;font-size:16px;font-weight:400;color:#12344d;">Replace hardware component</div><div class="t" style="left:161.25px;top:815.76px;font-size:16px;font-weight:400;color:#12344d;"><span class="tsk0">#TSK-3082</span></div><div class="t" style="left:438.6px;top:804.56px;font-size:16px;font-weight:400;color:#12344d;">Incident... / Chris Bro...</div><svg class="abs" style="left:628px;top:807.3px" width="12" height="10" viewBox="0 0 12 10"><path d="M2 3 L6 7 L10 3" fill="none" stroke="#7d8d9c" stroke-width="1.4" stroke-linecap="round" stroke-linejoin="round"/></svg><div class="t" style="left:684.6px;top:804.56px;font-size:16px;font-weight:400;color:#264966;">Completed</div><svg class="abs" style="left:777px;top:807.3px" width="12" height="10" viewBox="0 0 12 10"><path d="M2 3 L6 7 L10 3" fill="none" stroke="#7d8d9c" stroke-width="1.4" stroke-linecap="round" stroke-linejoin="round"/></svg><div class="t" style="left:819px;top:804.56px;font-size:16px;font-weight:400;color:#12344d;">2022, 29 Dec 0...</div><div class="t" style="left:997.3px;top:804.56px;font-size:16px;font-weight:400;color:#12344d;">#INC-219689</div><div class="badge" style="left:1132px;top:799.30px;background:#6b2c91;letter-spacing:0.6px">IT</div><div class="t" style="left:1167.5px;top:804.56px;font-size:16px;font-weight:700;color:#12344d;-webkit-text-stroke:0;">IT</div><div class="abs" style="left:97px;top:901.78px;width:1136px;height:1px;background:#ebeff3"></div><div class="cb" style="left:109.4px;top:864.28px"></div><div class="t" style="left:161.25px;top:854.04px;font-size:16px;font-weight:400;color:#12344d;">Replace HVAC system with a</div><div class="t" style="left:161.25px;top:875.94px;font-size:16px;font-weight:400;color:#12344d;">new one<span class="tsk">#TSK-3069</span></div><div class="t" style="left:438.6px;top:864.74px;font-size:16px;font-weight:400;color:#12344d;">Change... / Chris Bro...</div><svg class="abs" style="left:628px;top:867.48px" width="12" height="10" viewBox="0 0 12 10"><path d="M2 3 L6 7 L10 3" fill="none" stroke="#7d8d9c" stroke-width="1.4" stroke-linecap="round" stroke-linejoin="round"/></svg><div class="t" style="left:684.6px;top:864.74px;font-size:16px;font-weight:400;color:#264966;">In Progress</div><svg class="abs" style="left:779.2px;top:867.48px" width="12" height="10" viewBox="0 0 12 10"><path d="M2 3 L6 7 L10 3" fill="none" stroke="#7d8d9c" stroke-width="1.4" stroke-linecap="round" stroke-linejoin="round"/></svg><div class="t" style="left:819px;top:864.74px;font-size:16px;font-weight:400;color:#12344d;">2022, 27 De...</div><svg class="abs" style="left:931px;top:862.88px" width="19" height="19" viewBox="0 0 19 19"><circle cx="9.4" cy="9.4" r="7.6" fill="none" stroke="#d72d30" stroke-width="1.6"/><path d="M9.4 5.4 V10.2" stroke="#d72d30" stroke-width="1.8" stroke-linecap="round"/><circle cx="9.4" cy="13" r="1.05" fill="#d72d30"/></svg><div class="t" style="left:997.3px;top:864.74px;font-size:16px;font-weight:400;color:#12344d;">#CHN-981</div><div class="badge" style="left:1132px;top:859.48px;background:#c92341;letter-spacing:0.6px">FA</div><div class="t" style="left:1167.5px;top:864.74px;font-size:16px;font-weight:700;color:#12344d;-webkit-text-stroke:0;">Facility</div><div class="cb" style="left:109.4px;top:924.46px"></div><div class="t" style="left:161.25px;top:914.22px;font-size:16px;font-weight:400;color:#12344d;">Configure the network</div><div class="t" style="left:161.25px;top:936.12px;font-size:16px;font-weight:400;color:#12344d;"><span class="tsk0">#TSK-3055</span></div><div class="t" style="left:438.6px;top:924.92px;font-size:16px;font-weight:400;color:#12344d;">Helpdesk.../ Chris Bro...</div><svg class="abs" style="left:628px;top:927.66px" width="12" height="10" viewBox="0 0 12 10"><path d="M2 3 L6 7 L10 3" fill="none" stroke="#7d8d9c" stroke-width="1.4" stroke-linecap="round" stroke-linejoin="round"/></svg><div class="t" style="left:684.6px;top:924.92px;font-size:16px;font-weight:400;color:#264966;">Open</div><svg class="abs" style="left:735.5px;top:927.66px" width="12" height="10" viewBox="0 0 12 10"><path d="M2 3 L6 7 L10 3" fill="none" stroke="#7d8d9c" stroke-width="1.4" stroke-linecap="round" stroke-linejoin="round"/></svg><div class="t" style="left:819px;top:924.92px;font-size:16px;font-weight:400;color:#12344d;">2022, 27 Dec 0...</div><div class="t" style="left:997.3px;top:924.92px;font-size:16px;font-weight:400;color:#12344d;">#INC-219657</div><div class="badge" style="left:1132px;top:919.66px;background:#6b2c91;letter-spacing:0.6px">IT</div><div class="t" style="left:1167.5px;top:924.92px;font-size:16px;font-weight:700;color:#12344d;-webkit-text-stroke:0;">IT</div><div class="abs" style="left:1225px;top:180.6px;width:8px;height:781px;background:linear-gradient(to right,rgba(0,0,0,0),rgba(0,0,0,0.035))"></div><div class="abs" style="left:137px;top:180px;width:1px;height:801px;background:#edf0f3"></div><div class="t" style="left:161.4px;top:150.86px;font-size:16px;font-weight:700;color:#12344d;-webkit-text-stroke:0;letter-spacing:-0.2px">Title</div><div class="t" style="left:438.6px;top:150.86px;font-size:16px;font-weight:700;color:#12344d;-webkit-text-stroke:0;letter-spacing:-0.2px">Assigned to</div><div class="t" style="left:684.5px;top:150.86px;font-size:16px;font-weight:700;color:#12344d;-webkit-text-stroke:0;letter-spacing:-0.2px">Status</div><div class="t" style="left:819px;top:150.86px;font-size:16px;font-weight:700;color:#12344d;-webkit-text-stroke:0;letter-spacing:-0.2px">Due Date</div><div class="t" style="left:997.8px;top:150.86px;font-size:16px;font-weight:700;color:#12344d;-webkit-text-stroke:0;letter-spacing:-0.2px">Parent ID</div><div class="t" style="left:1132px;top:150.86px;font-size:16px;font-weight:700;color:#12344d;-webkit-text-stroke:0;letter-spacing:-0.2px">Workspace</div><svg class="abs" style="left:387px;top:150.4px" width="10" height="16" viewBox="0 0 10 16"><path d="M1.2 6 L5 1.6 L8.8 6 Z M1.2 10 L5 14.4 L8.8 10 Z" fill="#a4b0bc"/></svg><svg class="abs" style="left:633px;top:150.4px" width="10" height="16" viewBox="0 0 10 16"><path d="M1.2 6 L5 1.6 L8.8 6 Z M1.2 10 L5 14.4 L8.8 10 Z" fill="#a4b0bc"/></svg><svg class="abs" style="left:768px;top:150.4px" width="10" height="16" viewBox="0 0 10 16"><path d="M1.2 6 L5 1.6 L8.8 6 Z M1.2 10 L5 14.4 L8.8 10 Z" fill="#a4b0bc"/></svg><svg class="abs" style="left:946px;top:150.4px" width="10" height="16" viewBox="0 0 10 16"><path d="M1.2 6 L5 1.6 L8.8 6 Z M1.2 10 L5 14.4 L8.8 10 Z" fill="#a4b0bc"/></svg><svg class="abs" style="left:1080px;top:150.4px" width="10" height="16" viewBox="0 0 10 16"><path d="M1.2 6 L5 1.6 L8.8 6 Z M1.2 10 L5 14.4 L8.8 10 Z" fill="#a4b0bc"/></svg><div class="abs" style="left:1188px;top:137px;width:10.4px;height:43px;background:linear-gradient(to right,rgba(200,208,216,0),rgba(200,208,216,0.45))"></div><div class="abs" style="left:1198.4px;top:137.4px;width:34.6px;height:42.8px;background:#fff;border-radius:0 2px 0 0;box-shadow:0 0 1px rgba(0,0,0,0.12)"></div><svg class="abs" style="left:1195px;top:138px" width="40" height="42" viewBox="0 0 40 42"><path d="M29.91 19.30 L29.91 21.90 L27.35 22.50 L26.60 24.32 L27.99 26.55 L26.15 28.39 L23.92 27.00 L22.10 27.75 L21.50 30.31 L18.90 30.31 L18.30 27.75 L16.48 27.00 L14.25 28.39 L12.41 26.55 L13.80 24.32 L13.05 22.50 L10.49 21.90 L10.49 19.30 L13.05 18.70 L13.80 16.88 L12.41 14.65 L14.25 12.81 L16.48 14.20 L18.30 13.45 L18.90 10.89 L21.50 10.89 L22.10 13.45 L23.92 14.20 L26.15 12.81 L27.99 14.65 L26.60 16.88 L27.35 18.70 Z" fill="none" stroke="#12344d" stroke-width="1.7" stroke-linejoin="round"/><circle cx="20.200000000000045" cy="20.599999999999994" r="3" fill="none" stroke="#12344d" stroke-width="1.7"/></svg><svg class="abs" style="left:355px;top:208px;z-index:20" width="28" height="28" viewBox="0 0 28 28"><path d="M8.4 7 Q9.8 4.4 11.6 7 L12 12.2 Q13.6 9.6 15 11.6 Q16.8 10 18.2 12 Q20.2 10.6 21.4 12.4 L21.2 17.6 Q20.2 21 18.4 22.6 L11.6 22.6 Q9.6 20.6 7 17.4 L5.6 14.8 Q5.4 12.4 7.6 13.4 L9 14.8 Z" fill="#fff" stroke="#111" stroke-width="1.3" stroke-linejoin="round"/><path d="M13.2 15.6 V19.6 M15.4 15.6 V19.6 M17.6 15.6 V19.6" stroke="#666" stroke-width="0.9"/></svg><div class="abs" style="left:137.4px;top:961.4px;width:1095.6px;height:19.6px;background:#e9edf1"></div><svg class="abs" style="left:143px;top:964px" width="14" height="14" viewBox="0 0 14 14"><path d="M9.4 3 L5 7.2 L9.4 11.4" fill="none" stroke="#12344d" stroke-width="1.9" stroke-linecap="round" stroke-linejoin="round"/></svg><svg class="abs" style="left:1205px;top:964px" width="14" height="14" viewBox="0 0 14 14"><path d="M4.8 3 L9.2 7.2 L4.8 11.4" fill="none" stroke="#12344d" stroke-width="1.9" stroke-linecap="round" stroke-linejoin="round"/></svg><div class="abs" style="left:179.7px;top:969.6px;width:219.2px;height:4.4px;border-radius:2.2px;background:#8d9cab"></div><div id="panel"></div><div class="t" style="left:1296.3px;top:103.66px;font-size:18px;font-weight:700;color:#12344d;-webkit-text-stroke:0;">Filter</div><div class="t" style="left:1296.3px;top:145.65px;font-size:14px;font-weight:400;color:#475867;letter-spacing:0.15px;-webkit-text-stroke:0.3px #475867">Parent type</div><svg class="abs" style="left:1376px;top:143px" width="19" height="19" viewBox="0 0 19 19"><circle cx="9.5" cy="9.6" r="6.6" fill="none" stroke="#475867" stroke-width="1.3"/><path d="M9.5 8.4 V12.8 M8.4 12.8 H10.6 M8.6 8.4 H9.5" stroke="#475867" stroke-width="1.3" fill="none"/><circle cx="9.5" cy="6.4" r="0.9" fill="#475867"/></svg><div class="fbox" style="top:167.5px;height:35.4px"></div><div class="t" style="left:1310px;top:178.06px;font-size:16px;font-weight:400;color:#12344d;">All Parent Types</div><svg class="abs" style="left:1549px;top:179.4px" width="14" height="12" viewBox="0 0 14 12"><path d="M2.6 3.8 L7 8 L11.4 3.8" fill="none" stroke="#12344d" stroke-width="1.7" stroke-linecap="round" stroke-linejoin="round"/></svg><div class="abs" style="left:1269px;top:215px;width:331px;height:1px;background:#e3e8ee"></div><div class="t" style="left:1296px;top:235.26px;font-size:16px;font-weight:400;color:#12344d;">Task properties</div><div class="t" style="left:1296.3px;top:273.95px;font-size:14px;font-weight:400;color:#475867;-webkit-text-stroke:0.3px #475867">Workspace</div><div class="fbox" style="top:296px;height:34.6px"></div><div class="t" style="left:1309.6px;top:305.66px;font-size:16px;font-weight:400;color:#12344d;">All Workspaces</div><svg class="abs" style="left:1549px;top:307.4px" width="14" height="12" viewBox="0 0 14 12"><path d="M2.6 3.8 L7 8 L11.4 3.8" fill="none" stroke="#12344d" stroke-width="1.7" stroke-linecap="round" stroke-linejoin="round"/></svg><div class="t" style="left:1296.3px;top:352.15px;font-size:14px;font-weight:400;color:#475867;-webkit-text-stroke:0.3px #475867">Agents</div><div class="fbox" style="top:374px;height:34.6px"></div><div class="t" style="left:1296.3px;top:429.95px;font-size:14px;font-weight:400;color:#475867;-webkit-text-stroke:0.3px #475867">Group</div><div class="fbox" style="top:452px;height:34.6px"></div><div class="t" style="left:1309px;top:461.66px;font-size:16px;font-weight:400;color:#7f91a3;">Select</div><div class="t" style="left:1296.3px;top:507.75px;font-size:14px;font-weight:400;color:#475867;-webkit-text-stroke:0.3px #475867">Status</div><div class="fbox" style="top:529.8px;height:34.6px"></div><div class="t" style="left:1309px;top:539.46px;font-size:16px;font-weight:400;color:#7f91a3;">Select</div><div class="t" style="left:1296.3px;top:585.55px;font-size:14px;font-weight:400;color:#475867;-webkit-text-stroke:0.3px #475867">Created</div><div class="fbox" style="top:607.6px;height:34.6px"></div><div class="t" style="left:1309.6px;top:617.26px;font-size:16px;font-weight:400;color:#12344d;">Last 6 months</div><svg class="abs" style="left:1549px;top:619.0px" width="14" height="12" viewBox="0 0 14 12"><path d="M2.6 3.8 L7 8 L11.4 3.8" fill="none" stroke="#12344d" stroke-width="1.7" stroke-linecap="round" stroke-linejoin="round"/></svg><div class="abs" style="left:1300px;top:377px;width:54px;height:28.4px;border-radius:3px;background:#e9edf1"></div><div class="t" style="left:1306.4px;top:383.86px;font-size:16px;font-weight:400;color:#12344d;">Me</div><svg class="abs" style="left:1336px;top:385px" width="12" height="12" viewBox="0 0 12 12"><path d="M3.5 3.5 L8.5 8.5 M8.5 3.5 L3.5 8.5" stroke="#5f6b76" stroke-width="1.2" stroke-linecap="round"/></svg><div class="t" style="left:1296.3px;top:663.75px;font-size:14px;font-weight:400;color:#475867;-webkit-text-stroke:0.3px #475867">Due by</div><div class="cb" style="left:1298.8px;top:693.6px;width:15.4px;height:15.4px;border-color:#6f7d8a"></div><div class="t" style="left:1327px;top:693.75px;font-size:14px;font-weight:400;color:#475867;-webkit-text-stroke:0.4px #475867;letter-spacing:0.1px">Overdue</div><div class="cb" style="left:1298.8px;top:723.6px;width:15.4px;height:15.4px;border-color:#6f7d8a"></div><div class="t" style="left:1327px;top:723.75px;font-size:14px;font-weight:400;color:#475867;-webkit-text-stroke:0.4px #475867;letter-spacing:0.1px">Due today</div><div class="cb" style="left:1298.8px;top:753.6px;width:15.4px;height:15.4px;border-color:#6f7d8a"></div><div class="t" style="left:1327px;top:753.75px;font-size:14px;font-weight:400;color:#475867;-webkit-text-stroke:0.4px #475867;letter-spacing:0.1px">Tomorrow</div><div class="cb" style="left:1298.8px;top:783.6px;width:15.4px;height:15.4px;border-color:#6f7d8a"></div><div class="t" style="left:1327px;top:783.75px;font-size:14px;font-weight:400;color:#475867;-webkit-text-stroke:0.4px #475867;letter-spacing:0.1px">Next 8 hours</div><div class="abs" style="left:1591px;top:260.4px;width:6px;height:221.6px;border-radius:3px;background:#8b8f94"></div><div class="abs" style="left:1269px;top:933px;width:331px;height:1px;background:#dfe4ea"></div><div class="abs" style="left:1295.2px;top:950.2px;width:281px;height:36.3px;border-radius:4px;background:linear-gradient(#94a3b2,#7a8b9b)"></div><div class="t" style="left:1295.2px;top:950.2px;width:281px;height:36.3px;line-height:36.3px;text-align:center;font-size:16px;font-weight:700;color:#b4bfca;padding-top:1px">Apply filters</div></body></html>
